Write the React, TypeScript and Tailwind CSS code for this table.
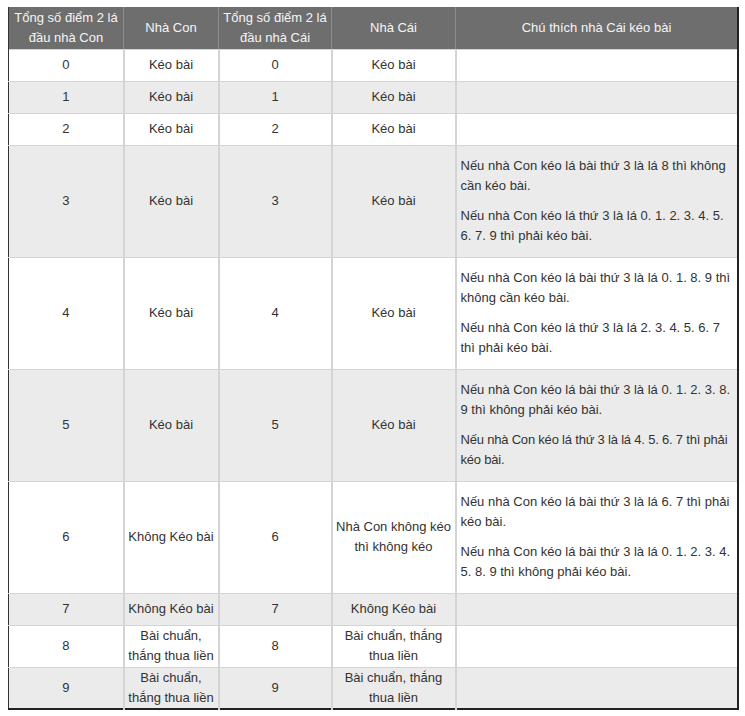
const rows: { a: string; b: string; c: string; d: string; notes: string[]; h: string; gray: boolean; tight?: boolean }[] = [
  { a: '0', b: 'Kéo bài', c: '0', d: 'Kéo bài', notes: [], h: 'h-[32px]', gray: false },
  { a: '1', b: 'Kéo bài', c: '1', d: 'Kéo bài', notes: [], h: 'h-[32px]', gray: true },
  { a: '2', b: 'Kéo bài', c: '2', d: 'Kéo bài', notes: [], h: 'h-[32px]', gray: false },
  {
    a: '3', b: 'Kéo bài', c: '3', d: 'Kéo bài', h: 'h-[112px]', gray: true,
    notes: [
      'Nếu nhà Con kéo lá bài thứ 3 là lá 8 thì không cần kéo bài.',
      'Nếu nhà Con kéo lá thứ 3 là lá 0. 1. 2. 3. 4. 5. 6. 7. 9 thì phải kéo bài.',
    ],
  },
  {
    a: '4', b: 'Kéo bài', c: '4', d: 'Kéo bài', h: 'h-[112px]', gray: false,
    notes: [
      'Nếu nhà Con kéo lá bài thứ 3 là lá 0. 1. 8. 9 thì không cần kéo bài.',
      'Nếu nhà Con kéo lá thứ 3 là lá 2. 3. 4. 5. 6. 7 thì phải kéo bài.',
    ],
  },
  {
    a: '5', b: 'Kéo bài', c: '5', d: 'Kéo bài', h: 'h-[112px]', gray: true, tight: true,
    notes: [
      'Nếu nhà Con kéo lá bài thứ 3 là lá 0. 1. 2. 3. 8. 9 thì không phải kéo bài.',
      'Nếu nhà Con kéo lá thứ 3 là lá 4. 5. 6. 7 thì phải kéo bài.',
    ],
  },
  {
    a: '6', b: 'Không Kéo bài', c: '6', d: 'Nhà Con không kéo thì không kéo', h: 'h-[112px]', gray: false,
    notes: [
      'Nếu nhà Con kéo lá bài thứ 3 là lá 6. 7 thì phải kéo bài.',
      'Nếu nhà Con kéo lá bài thứ 3 là lá 0. 1. 2. 3. 4. 5. 8. 9 thì không phải kéo bài.',
    ],
  },
  { a: '7', b: 'Không Kéo bài', c: '7', d: 'Không Kéo bài', notes: [], h: 'h-[32px]', gray: true },
  { a: '8', b: 'Bài chuẩn, thắng thua liền', c: '8', d: 'Bài chuẩn, thắng thua liền', notes: [], h: 'h-[42px]', gray: false },
  { a: '9', b: 'Bài chuẩn, thắng thua liền', c: '9', d: 'Bài chuẩn, thắng thua liền', notes: [], h: 'h-[42px]', gray: true },
];

const td = 'border-x-2 border-y border-[#d4d4d4] text-center align-middle px-0 py-0';
const th = 'border-x border-[#8c8c8c] text-center align-middle font-normal px-0 py-0';

export default function App() {
  return (
    <div className="bg-white min-h-[716px] pt-[7px] pl-[8px]">
      <table
        className="table-fixed border-collapse w-[731px] text-[13px] leading-[20px] text-[#333]"
        style={{ fontFamily: '"Liberation Sans", Arial, sans-serif' }}
      >
        <colgroup>
          <col className="w-[115px]" />
          <col className="w-[95px]" />
          <col className="w-[113px]" />
          <col className="w-[124px]" />
          <col />
        </colgroup>
        <thead>
          <tr className="h-[42px] bg-[#6e6e6e] text-[#f5f5f5]">
            <th className={th + ' border-l-[#333]'}>Tổng số điểm 2 lá đầu nhà Con</th>
            <th className={th}>Nhà Con</th>
            <th className={th}>Tổng số điểm 2 lá đầu nhà Cái</th>
            <th className={th}>Nhà Cái</th>
            <th className={th + ' border-r-2 border-r-[#222]'}>Chú thích nhà Cái kéo bài</th>
          </tr>
        </thead>
        <tbody className="border-b-2 border-[#222]">
          {rows.map((r) => (
            <tr key={r.a} className={r.h + ' ' + (r.gray ? 'bg-[#ebebeb]' : 'bg-white')}>
              <td className={td + ' border-l border-l-[#333]'}>{r.a}</td>
              <td className={td}>{r.b}</td>
              <td className={td}>{r.c}</td>
              <td className={td + ' px-[2px]'}>{r.d}</td>
              <td className={td + ' text-left pl-[4px] pr-0 border-r-2 border-r-[#222]'}>
                {r.notes.map((n, i) => (
                  <p
                    key={i}
                    className={(i > 0 ? 'mt-[10px]' : '') + (r.tight && i > 0 ? ' tracking-[-0.2px]' : '')}
                  >
                    {n}
                  </p>
                ))}
              </td>
            </tr>
          ))}
        </tbody>
      </table>
    </div>
  );
}
